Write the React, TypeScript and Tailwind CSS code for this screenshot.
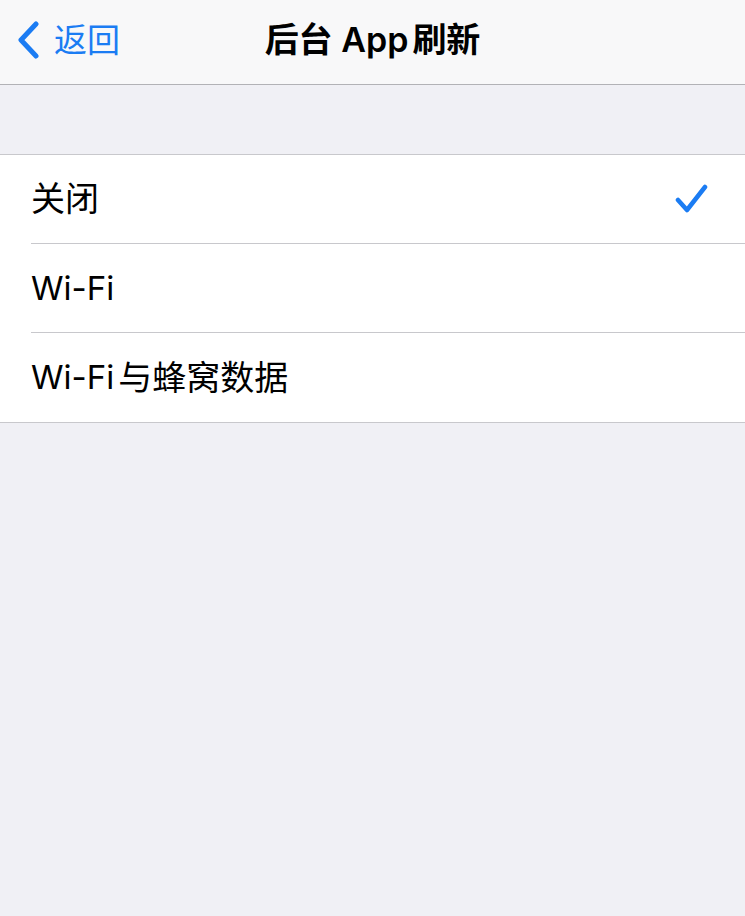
import React from 'react';

const rows = [
  { latin: '', cjk: '关闭', checked: true },
  { latin: 'Wi-Fi', cjk: '', checked: false },
  { latin: 'Wi-Fi', cjk: '与蜂窝数据', checked: false },
];

export default function App() {
  return (
    <div
      className="min-h-[916px] w-[745px] bg-[#f0f0f5]"
      style={{ fontFamily: 'Inter, "Noto Sans CJK SC", sans-serif' }}
    >
      <div className="relative flex h-[85px] items-center justify-center border-b border-[#b2b2b6] bg-[#f8f8f9] pb-[5px]">
        <div className="absolute left-[16px] top-0 flex h-full items-center gap-[14px] pb-[4px] text-[#1b7cf3]">
          <svg width="24" height="38" viewBox="0 0 24 38" fill="none">
            <path d="M20 3 L5 19 L20 35" stroke="#1b7cf3" strokeWidth="5" strokeLinecap="round" strokeLinejoin="round" />
          </svg>
          <span className="text-[33px] leading-none">返回</span>
        </div>
        <h1 className="text-[34px] font-semibold leading-none text-black">
          后台 App<span className="ml-[4px]">刷新</span>
        </h1>
      </div>

      <div className="mt-[69px] border-y border-[#c8c8cc] bg-white">
        {rows.map((row, i) => (
          <div key={i} className="pl-[31px]">
            <div
              className={`flex h-[89px] items-center justify-between pr-[36px] ${
                i < rows.length - 1 ? 'border-b border-[#c8c8cc]' : ''
              }`}
            >
              <span className="flex items-center leading-none text-black">
                {row.latin && <span className="text-[33px]">{row.latin}</span>}
                {row.cjk && (
                  <span className={`text-[34px] ${row.latin ? 'ml-[4px]' : ''}`}>{row.cjk}</span>
                )}
              </span>
              {row.checked && (
                <svg width="34" height="32" viewBox="0 0 34 32" fill="none">
                  <path d="M3 17 L12 27 L30 4" stroke="#1b7cf3" strokeWidth="4.5" strokeLinecap="round" strokeLinejoin="round" />
                </svg>
              )}
            </div>
          </div>
        ))}
      </div>
    </div>
  );
}
